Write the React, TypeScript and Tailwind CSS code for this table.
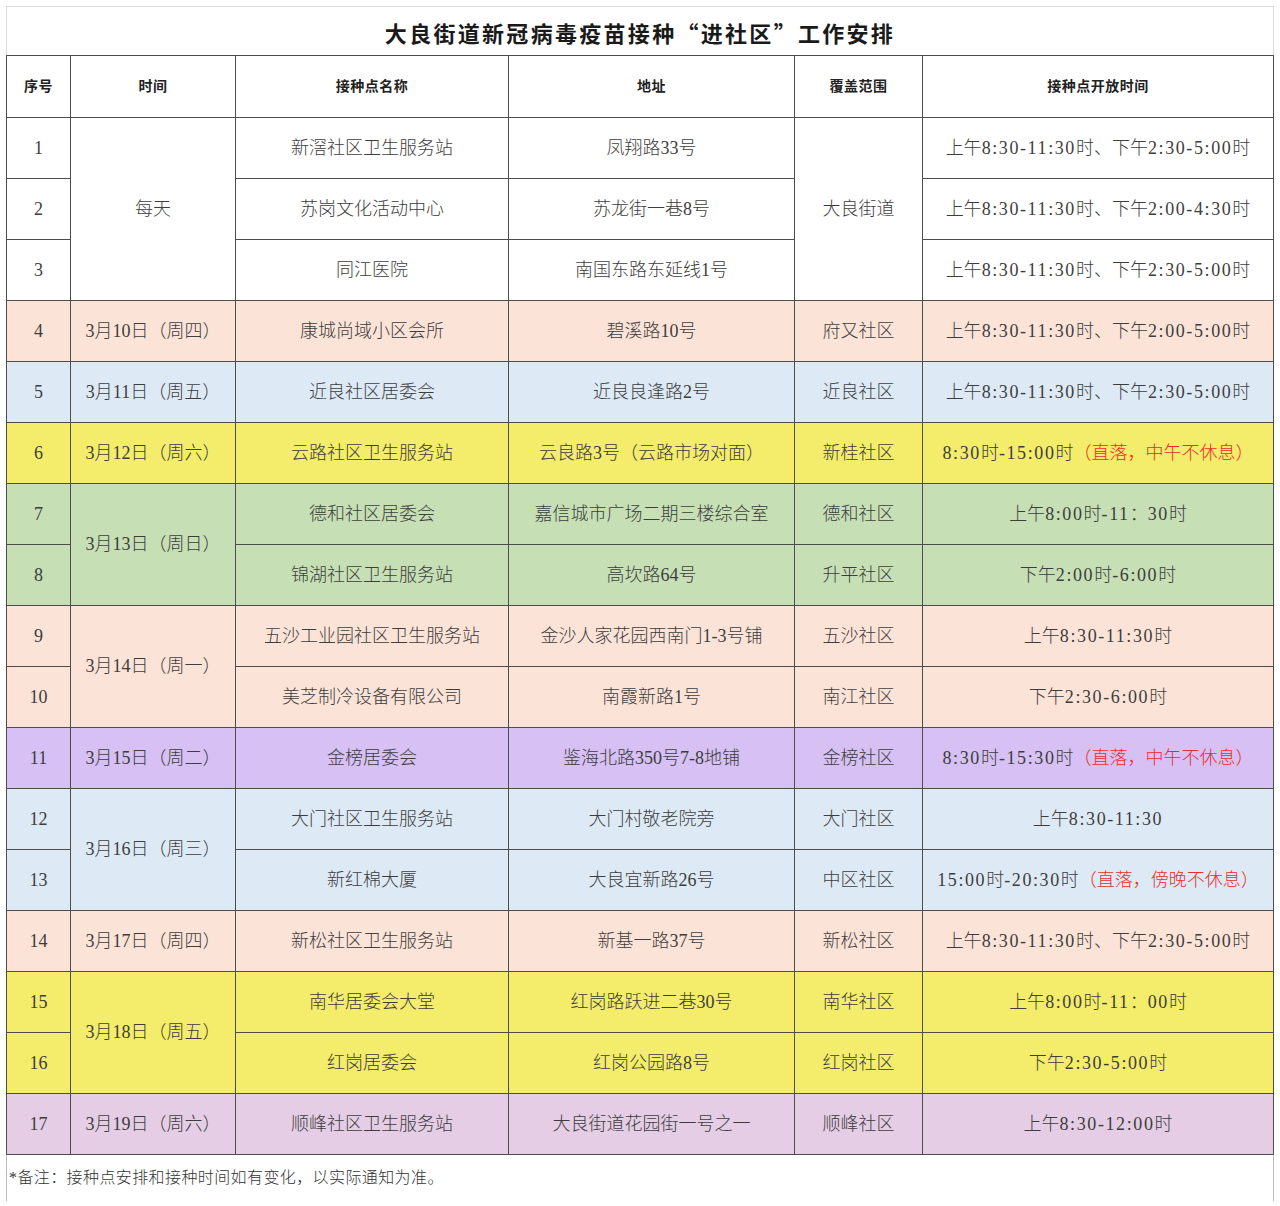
import React from "react";

type Row = {
  no: number;
  date?: string;
  dateSpan?: number;
  site: string;
  addr: string;
  area?: string;
  areaSpan?: number;
  time: string;
  note?: string;
  bg: string;
};

const rows: Row[] = [
  { no: 1, date: "每天", dateSpan: 3, site: "新滘社区卫生服务站", addr: "凤翔路33号", area: "大良街道", areaSpan: 3, time: "上午8:30-11:30时、下午2:30-5:00时", bg: "bg-white" },
  { no: 2, site: "苏岗文化活动中心", addr: "苏龙街一巷8号", time: "上午8:30-11:30时、下午2:00-4:30时", bg: "bg-white" },
  { no: 3, site: "同江医院", addr: "南国东路东延线1号", time: "上午8:30-11:30时、下午2:30-5:00时", bg: "bg-white" },
  { no: 4, date: "3月10日（周四）", site: "康城尚域小区会所", addr: "碧溪路10号", area: "府又社区", time: "上午8:30-11:30时、下午2:00-5:00时", bg: "bg-[#fce3d7]" },
  { no: 5, date: "3月11日（周五）", site: "近良社区居委会", addr: "近良良逢路2号", area: "近良社区", time: "上午8:30-11:30时、下午2:30-5:00时", bg: "bg-[#ddeaf6]" },
  { no: 6, date: "3月12日（周六）", site: "云路社区卫生服务站", addr: "云良路3号（云路市场对面）", area: "新桂社区", time: "8:30时-15:00时", note: "（直落，中午不休息）", bg: "bg-[#f4ec6b]" },
  { no: 7, date: "3月13日（周日）", dateSpan: 2, site: "德和社区居委会", addr: "嘉信城市广场二期三楼综合室", area: "德和社区", time: "上午8:00时-11：30时", bg: "bg-[#c6dfb4]" },
  { no: 8, site: "锦湖社区卫生服务站", addr: "高坎路64号", area: "升平社区", time: "下午2:00时-6:00时", bg: "bg-[#c6dfb4]" },
  { no: 9, date: "3月14日（周一）", dateSpan: 2, site: "五沙工业园社区卫生服务站", addr: "金沙人家花园西南门1-3号铺", area: "五沙社区", time: "上午8:30-11:30时", bg: "bg-[#fce3d7]" },
  { no: 10, site: "美芝制冷设备有限公司", addr: "南霞新路1号", area: "南江社区", time: "下午2:30-6:00时", bg: "bg-[#fce3d7]" },
  { no: 11, date: "3月15日（周二）", site: "金榜居委会", addr: "鉴海北路350号7-8地铺", area: "金榜社区", time: "8:30时-15:30时", note: "（直落，中午不休息）", bg: "bg-[#d6c0f4]" },
  { no: 12, date: "3月16日（周三）", dateSpan: 2, site: "大门社区卫生服务站", addr: "大门村敬老院旁", area: "大门社区", time: "上午8:30-11:30", bg: "bg-[#ddeaf6]" },
  { no: 13, site: "新红棉大厦", addr: "大良宜新路26号", area: "中区社区", time: "15:00时-20:30时", note: "（直落，傍晚不休息）", bg: "bg-[#ddeaf6]" },
  { no: 14, date: "3月17日（周四）", site: "新松社区卫生服务站", addr: "新基一路37号", area: "新松社区", time: "上午8:30-11:30时、下午2:30-5:00时", bg: "bg-[#fce3d7]" },
  { no: 15, date: "3月18日（周五）", dateSpan: 2, site: "南华居委会大堂", addr: "红岗路跃进二巷30号", area: "南华社区", time: "上午8:00时-11：00时", bg: "bg-[#f4ec6b]" },
  { no: 16, site: "红岗居委会", addr: "红岗公园路8号", area: "红岗社区", time: "下午2:30-5:00时", bg: "bg-[#f4ec6b]" },
  { no: 17, date: "3月19日（周六）", site: "顺峰社区卫生服务站", addr: "大良街道花园街一号之一", area: "顺峰社区", time: "上午8:30-12:00时", bg: "bg-[#e5cde5]" },
];

const headers = ["序号", "时间", "接种点名称", "地址", "覆盖范围", "接种点开放时间"];

const cell = "border border-[#4d4d4d] text-center align-middle p-0 whitespace-nowrap";

// the schedule digits are set wider than the serif's own figures (half-width look)
function TimeText({ text }: { text: string }) {
  const parts = text.split(/([0-9:\-]+)/);
  return (
    <>
      {parts.map((p, i) =>
        /^[0-9:\-]+$/.test(p) ? (
          <span key={i} className="tracking-[1.6px]">
            {p}
          </span>
        ) : (
          <React.Fragment key={i}>{p}</React.Fragment>
        ),
      )}
    </>
  );
}

export default function App() {
  return (
    <div className="bg-white w-[1280px] h-[1206px] pt-[6px] pl-[6px] font-['Liberation_Serif','Noto_Sans_CJK_SC',serif] text-[#3d3d3d]">
      <table className="table-fixed border-collapse w-[1267px]">
        <colgroup>
          <col className="w-[64px]" />
          <col className="w-[165px]" />
          <col className="w-[273px]" />
          <col className="w-[286px]" />
          <col className="w-[128px]" />
          <col className="w-[351px]" />
        </colgroup>
        <thead>
          <tr className="h-[49px]">
            <th
              colSpan={6}
              className="border-t border-x border-[#dcdcdc] border-b-[#4d4d4d] border-b text-center align-middle pt-[3px] font-['Noto_Sans_CJK_SC',sans-serif] text-[22px] font-bold tracking-[2.3px] text-[#1a1a1a]"
            >
              大良街道新冠病毒疫苗接种“进社区”工作安排
            </th>
          </tr>
          <tr className="h-[62px]">
            {headers.map((h) => (
              <th key={h} className={`${cell} text-[14px] font-bold tracking-[0.5px] text-[#222]`}>
                {h}
              </th>
            ))}
          </tr>
        </thead>
        <tbody className="text-[18px] font-light">
          {rows.map((r) => (
            <tr key={r.no} className={`h-[61px] ${r.bg}`}>
              <td className={cell}>{r.no}</td>
              {r.date && (
                <td rowSpan={r.dateSpan ?? 1} className={`${cell} ${r.bg}`}>
                  {r.date}
                </td>
              )}
              <td className={cell}>{r.site}</td>
              <td className={cell}>{r.addr}</td>
              {r.area && (
                <td rowSpan={r.areaSpan ?? 1} className={`${cell} ${r.bg}`}>
                  {r.area}
                </td>
              )}
              <td className={cell}>
                <TimeText text={r.time} />
                {r.note && <span className="text-[#ee2b2b]">{r.note}</span>}
              </td>
            </tr>
          ))}
          <tr className="h-[46px]">
            <td
              colSpan={6}
              className="border-x border-[#bdbdbd] text-left align-middle pl-[2px] text-[16px] tracking-[0.4px] text-[#333] whitespace-nowrap"
            >
              *备注：接种点安排和接种时间如有变化，以实际通知为准。
            </td>
          </tr>
        </tbody>
      </table>
    </div>
  );
}
